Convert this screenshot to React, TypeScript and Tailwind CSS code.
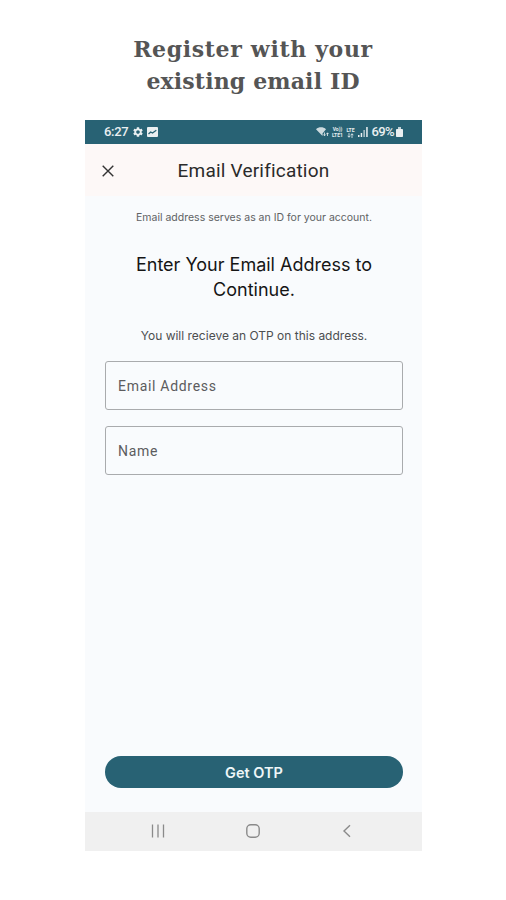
import { MdSettings } from "react-icons/md";

function StatusBar() {
  return (
    <div className="flex h-6 items-center bg-[#286274] pr-[19px] pl-[19px] font-['Roboto',sans-serif] text-white/90">
      <span className="text-[13px] leading-6 font-medium tracking-[-0.3px]">6:27</span>
      <MdSettings className="ml-1 h-3 w-3" />
      <svg className="ml-[3px] h-[10px] w-[11px]" viewBox="0 0 11 10">
        <rect width="11" height="10" rx="1" fill="currentColor" />
        <path d="M1.5 7l2.200-2 1.800 1 3.800-2.800" fill="none" stroke="#286274" strokeWidth="1.300" />
      </svg>
      <svg className="ml-auto h-3 w-[13px]" viewBox="0 0 13 12" fill="currentColor">
        <path d="M0 3.200C2.800.7 7.200.7 10 3.200L6.500 7.500V10z" opacity=".85" />
        <path d="M8.500 6.500v3M7 8.300l1.500 1.500L10 8.300M11.500 10V7M10.500 8l1-1.200 1 1.200" stroke="currentColor" strokeWidth=".8" fill="none" />
      </svg>
      <div className="ml-0.5 flex w-[12px] flex-col items-center text-[5px] leading-[6px] font-bold">
        <span>Vo))</span>
        <span>LTE1</span>
      </div>
      <div className="ml-0.5 flex w-[10px] flex-col items-center text-[5px] leading-[6px] font-bold">
        <span>LTE</span>
        <svg className="h-[5px] w-[7px]" viewBox="0 0 7 5">
          <path d="M2 0v4M.7 2.800L2 4.300l1.300-1.500M5 5V1M3.700 2.200L5 .7l1.300 1.500" fill="none" stroke="currentColor" strokeWidth=".8" />
        </svg>
      </div>
      <svg className="ml-[3px] h-[10px] w-[10px]" viewBox="0 0 10 10" fill="currentColor">
        <rect x="0" y="8" width="1.500" height="2" />
        <rect x="2.700" y="6" width="1.500" height="4" />
        <rect x="5.400" y="3" width="1.500" height="7" opacity=".7" />
        <rect x="8.200" y="0" width="1.500" height="10" />
      </svg>
      <span className="ml-[3px] text-[13px] leading-6 font-medium tracking-[-0.6px]">69%</span>
      <svg className="ml-0.5 h-[10px] w-[7px]" viewBox="0 0 7 10" fill="currentColor">
        <path d="M2 0h3v2H2z" opacity=".8" />
        <rect y="2" width="7" height="8" rx=".8" />
      </svg>
    </div>
  );
}

function Header() {
  return (
    <div className="relative flex h-[52px] items-center justify-center bg-[#fdf8f7] pt-0.5">
      <svg className="absolute left-[17px] h-[12px] w-[12px]" viewBox="0 0 12 12">
        <path d="M.7.7l10.600 10.600M11.300.7L.7 11.300" stroke="#333" strokeWidth="1.400" />
      </svg>
      <h2 className="font-['Roboto',sans-serif] text-[19px] tracking-[0.2px] text-[#2b2b2b]">
        Email Verification
      </h2>
    </div>
  );
}

function Field({ label }: { label: string }) {
  return (
    <div className="flex h-[49px] items-center rounded-[3px] border border-[#a9abad] px-[12px] font-['Roboto',sans-serif] text-sm tracking-[0.7px] text-[#5c5c5e]">
      {label}
    </div>
  );
}

function NavBar() {
  return (
    <div className="grid h-[39px] grid-cols-[47px_52px_43px_51px_43px_52px] items-center bg-[#f0f0f0] pb-0.5 text-[#8a8a8a]">
      <svg className="col-start-2 h-[14px] w-[14px] justify-self-center" viewBox="0 0 14 14">
        <path d="M1.500.5v13M7 .5v13M12.500.5v13" stroke="currentColor" strokeWidth="1.300" />
      </svg>
      <svg className="col-start-4 h-[14px] w-[14px] justify-self-center" viewBox="0 0 14 14">
        <rect x=".8" y=".8" width="12.400" height="12.400" rx="4" fill="none" stroke="currentColor" strokeWidth="1.400" />
      </svg>
      <svg className="col-start-6 h-[14px] w-[14px] justify-self-center" viewBox="0 0 14 14">
        <path d="M10 1.200L4 7l6 5.800" fill="none" stroke="currentColor" strokeWidth="1.400" />
      </svg>
    </div>
  );
}

export default function App() {
  return (
    <div className="flex h-[900px] w-[506px] flex-col bg-white">
      <h1 className="mt-[33px] h-[87px] text-center font-['DejaVu_Serif',serif] text-[22px] leading-8 font-bold text-[#555]">
        <span className="tracking-[0.65px]">Register with your</span>
        <br />
        <span className="tracking-[0.15px]">existing email ID</span>
      </h1>

      <div className="ml-[85px] flex h-[731px] w-[337px] flex-col bg-[#f9fbfd]">
        <StatusBar />
        <Header />
        <div className="flex flex-1 flex-col pr-[19px] pl-5 text-center font-['Inter',sans-serif]">
          <p className="mt-[14px] text-[10.5px] leading-4 whitespace-nowrap text-[#606264]">
            Email address serves as an ID for your account.
          </p>
          <p className="mt-[26px] text-lg leading-[25px] whitespace-nowrap text-[#151515]">
            Enter Your Email Address to
            <br />
            Continue.
          </p>
          <p className="mt-[26px] text-[12px] leading-4 whitespace-nowrap text-[#4c4e50]">
            You will recieve an OTP on this address.
          </p>
          <div className="mt-[17px] flex flex-col gap-4 text-left">
            <Field label="Email Address" />
            <Field label="Name" />
          </div>
          <button className="mt-auto mb-6 h-8 rounded-full bg-[#286274] pt-px text-[14.5px] font-semibold text-[#eef6f8]">
            Get OTP
          </button>
        </div>
        <NavBar />
      </div>
    </div>
  );
}
